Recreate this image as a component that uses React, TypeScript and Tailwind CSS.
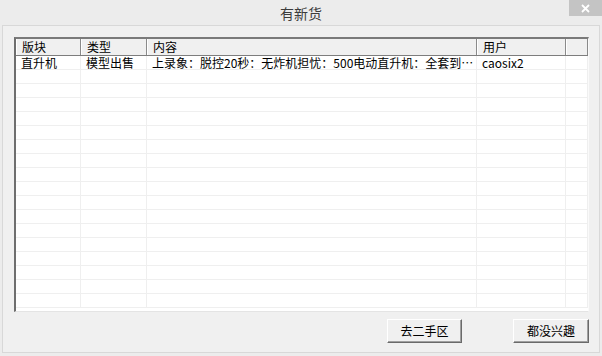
import React from 'react';

const columns = [
  { title: '版块', width: 'w-[65px]' },
  { title: '类型', width: 'w-[66px]' },
  { title: '内容', width: 'w-[330px]' },
  { title: '用户', width: 'w-[89px]' },
  { title: '', width: 'flex-1' },
];

const rows = [['直升机', '模型出售', '上录象：脱控20秒：无炸机担忧：500电动直升机：全套到…', 'caosix2', '']];

export default function App() {
  const emptyRows = Array.from({ length: 17 });

  return (
    <div className="w-[602px] h-[356px] bg-[#ececec] flex flex-col text-[12px] text-black overflow-hidden" style={{ fontFamily: '"Noto Sans CJK SC", "Noto Sans", sans-serif' }}>
      {/* 标题栏 */}
      <div className="relative h-[25px] shrink-0 flex items-center justify-center">
        <span className="text-[14px] text-[#3c3c3c] leading-none">有新货</span>
        <div className="absolute top-0 right-0 w-[33px] h-[16px] bg-[#c4c4c4] flex items-center justify-center">
          <svg width="9" height="9" viewBox="0 0 9 9">
            <path d="M1 1 L8 8 M8 1 L1 8" stroke="#ffffff" strokeWidth="1.8" />
          </svg>
        </div>
      </div>

      {/* 主面板 */}
      <div className="mx-[2px] h-[328px] shrink-0 border border-[#d8d8d8] bg-[#f0f0f0] pl-[11px] pr-[10px] pt-[11px] flex flex-col">
        <div className="h-[275px] border-t-2 border-l-2 border-t-[#7a7a7a] border-l-[#6e6e6e] border-r border-b border-r-[#fafafa] border-b-[#e4e4e4] bg-white flex flex-col overflow-hidden">
          {/* 表头 */}
          <div className="flex h-[17px] shrink-0 bg-[#f0f0f0] border-b border-[#7d7d7d]">
            {columns.map((c, i) => (
              <div key={i} className={`${c.width} h-full border-r border-[#8a8a8a] border-l border-l-white pl-[5px] flex items-center leading-[12px] whitespace-nowrap`}>
                {c.title}
              </div>
            ))}
          </div>

          {/* 数据行 */}
          {rows.map((r, ri) => (
            <div key={ri} className="flex h-[14px] shrink-0 border-b border-[#efefef]">
              {r.map((cell, ci) => (
                <div key={ci} className={`${columns[ci].width} h-full border-r border-[#efefef] pl-[5px] flex items-center leading-[12px] whitespace-nowrap`}>
                  {cell}
                </div>
              ))}
            </div>
          ))}
          {emptyRows.map((_, ri) => (
            <div key={ri} className="flex h-[14px] shrink-0 border-b border-[#efefef]">
              {columns.map((c, ci) => (
                <div key={ci} className={`${c.width} h-full border-r border-[#efefef]`} />
              ))}
            </div>
          ))}
        </div>

        {/* 按钮 */}
        <div className="flex justify-end gap-[51px] mt-[7px]">
          <button className="w-[75px] h-[24px] bg-[#f0f0f0] border border-t-white border-l-white border-r-[#6a6a6a] border-b-[#6a6a6a] shadow-[inset_-1px_-1px_0_#a0a0a0] flex items-center justify-center leading-none">
            去二手区
          </button>
          <button className="w-[76px] h-[24px] bg-[#f0f0f0] border border-t-white border-l-white border-r-[#6a6a6a] border-b-[#6a6a6a] shadow-[inset_-1px_-1px_0_#a0a0a0] flex items-center justify-center leading-none">
            都没兴趣
          </button>
        </div>
      </div>
    </div>
  );
}
